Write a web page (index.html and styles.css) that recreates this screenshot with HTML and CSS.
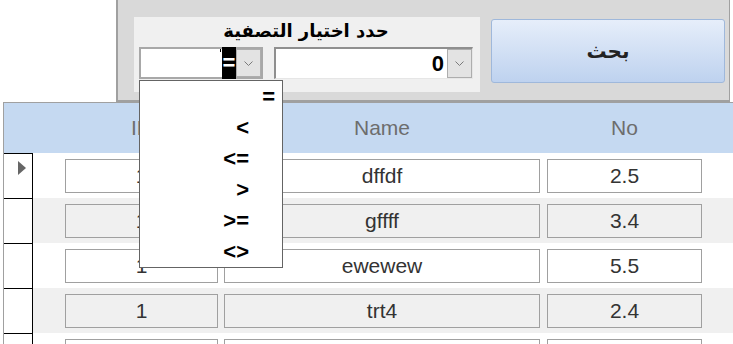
FILE: index.html
```html
<!DOCTYPE html>
<html lang="ar">
<head>
    <meta charset="UTF-8">
    <title>Filter Grid</title>
    <link rel="stylesheet" href="styles.css">
</head>
<body>
<div class="top">
    <div class="blank"></div>
    <div class="panel">
        <div class="filter">
            <div class="filter-title">حدد اختيار التصفية</div>
            <div class="filter-row">
                <div class="combo op">
                    <span class="caret"></span>
                    <span class="op-value">=</span>
                    <span class="arrow"><svg width="9" height="5" viewBox="0 0 9 5"><polyline points="0.5,0.5 4.5,4.5 8.5,0.5" fill="none" stroke="#7a7a7a" stroke-width="1"/></svg></span>
                </div>
                <div class="combo val">
                    <span class="val-text">0</span>
                    <span class="arrow"><svg width="9" height="5" viewBox="0 0 9 5"><polyline points="0.5,0.5 4.5,4.5 8.5,0.5" fill="none" stroke="#7a7a7a" stroke-width="1"/></svg></span>
                </div>
            </div>
        </div>
        <button class="search">بحث</button>
    </div>
</div>

<div class="grid">
    <div class="grid-head">
        <div class="rh-head"></div>
        <div class="hc c1">ID</div>
        <div class="hc c2">Name</div>
        <div class="hc c3">No</div>
    </div>
    <div class="row">
        <div class="rh"><span class="pointer"></span></div>
        <div class="cell c1">1</div>
        <div class="cell c2">dffdf</div>
        <div class="cell c3">2.5</div>
    </div>
    <div class="row alt">
        <div class="rh"></div>
        <div class="cell c1">1</div>
        <div class="cell c2">gffff</div>
        <div class="cell c3">3.4</div>
    </div>
    <div class="row">
        <div class="rh"></div>
        <div class="cell c1">1</div>
        <div class="cell c2">ewewew</div>
        <div class="cell c3">5.5</div>
    </div>
    <div class="row alt">
        <div class="rh"></div>
        <div class="cell c1">1</div>
        <div class="cell c2">trt4</div>
        <div class="cell c3">2.4</div>
    </div>
    <div class="row">
        <div class="rh"></div>
        <div class="cell c1"></div>
        <div class="cell c2"></div>
        <div class="cell c3"></div>
    </div>
</div>

<ul class="op-list">
    <li class="first">=</li>
    <li>&lt;</li>
    <li>&lt;=</li>
    <li>&gt;</li>
    <li>&gt;=</li>
    <li>&lt;&gt;</li>
</ul>
</body>
</html>
```

FILE: styles.css
```css
body {
    margin: 0;
    font-family: "Liberation Sans", Arial, sans-serif;
    background: #fff;
    overflow: hidden;
    position: relative;
}

/* top search area */
.top {
    display: flex;
    height: 102px;
}
.blank {
    width: 116px;
}
.panel {
    width: 614px;
    box-sizing: border-box;
    display: flex;
    align-items: flex-start;
    background: #d9d9d9;
    border-left: 2px solid #a0a0a0;
    border-right: 1px solid #a0a0a0;
    border-bottom: 2px solid #a0a0a0;
}
.filter {
    margin: 17px 0 0 16px;
    width: 346px;
    height: 75px;
    box-sizing: border-box;
    padding: 0 7px 0 5px;
    background: #f0f0f0;
}
.filter-title {
    height: 30px;
    line-height: 28px;
    text-align: center;
    font-family: "DejaVu Sans", sans-serif;
    font-weight: bold;
    font-size: 18px;
    color: #000;
}
.filter-row {
    display: flex;
    gap: 11px;
}
.combo {
    position: relative;
    height: 32px;
    box-sizing: border-box;
    display: flex;
    justify-content: flex-end;
    background: #fff;
}
.combo.op {
    width: 124px;
    border: 2px solid #a8a8a8;
}
.combo.val {
    width: 199px;
    border-top: 2px solid #8f8f8f;
    border-left: 2px solid #8f8f8f;
    border-bottom: 1px solid #e6e6e6;
    border-right: 1px solid #e6e6e6;
}
.caret {
    position: absolute;
    left: 79px;
    top: 0;
    width: 1px;
    height: 3px;
    background: #000;
}
.op-value {
    width: 14px;
    margin-top: -2px;
    height: 32px;
    background: #000;
    color: #fff;
    font-weight: bold;
    font-size: 22px;
    line-height: 32px;
    text-align: center;
}
.val-text {
    font-weight: bold;
    font-size: 22px;
    line-height: 29px;
    padding-right: 3px;
}
.arrow {
    width: 25px;
    box-sizing: border-box;
    background: #e3e3e3;
    border: 1px solid #adadad;
    display: flex;
    align-items: center;
    justify-content: center;
}
.search {
    margin: 19px 0 0 11px;
    width: 234px;
    height: 64px;
    border: 1px solid #9fb8db;
    border-radius: 3px;
    background: linear-gradient(#e6eefa, #bed2ef);
    font-family: "DejaVu Sans", sans-serif;
    font-weight: bold;
    font-size: 20px;
    color: #222;
    padding: 0;
}

/* data grid */
.grid {
    margin-left: 3px;
    border-left: 1px solid #a0a0a0;
    border-top: 1px solid #a0a0a0;
}
.grid-head {
    display: flex;
    height: 50px;
    background: #c5d9f1;
}
.rh-head {
    width: 29px;
}
.hc {
    text-align: center;
    line-height: 50px;
    font-size: 21px;
    color: #6d6d6d;
}
.c1 { margin-left: 32px; width: 153px; }
.c2 { margin-left: 6px; width: 316px; }
.c3 { margin-left: 7px; width: 155px; }

.row {
    display: flex;
    height: 45px;
    background: #fff;
}
.row.alt {
    background: #f0f0f0;
}
.rh {
    width: 29px;
    box-sizing: border-box;
    background: #fff;
    border-top: 1px solid #000;
    border-right: 1px solid #000;
    padding: 7px 0 0 14px;
}
.pointer {
    display: block;
    width: 0;
    height: 0;
    border-left: 8px solid #666;
    border-top: 7px solid transparent;
    border-bottom: 7px solid transparent;
}
.cell {
    margin-top: 6px;
    height: 34px;
    box-sizing: border-box;
    border: 1px solid #a0a0a0;
    text-align: center;
    line-height: 32px;
    font-size: 21px;
    color: #333;
}

/* open operator dropdown */
.op-list {
    position: absolute;
    left: 139px;
    top: 80px;
    width: 144px;
    height: 188px;
    box-sizing: border-box;
    margin: 0;
    padding: 0;
    list-style: none;
    background: #fff;
    border: 1px solid #646464;
}
.op-list li {
    height: 31px;
    line-height: 31px;
    text-align: right;
    padding-right: 33px;
    font-weight: bold;
    font-size: 22px;
    color: #000;
}
.op-list li.first {
    padding-right: 7px;
}
```
